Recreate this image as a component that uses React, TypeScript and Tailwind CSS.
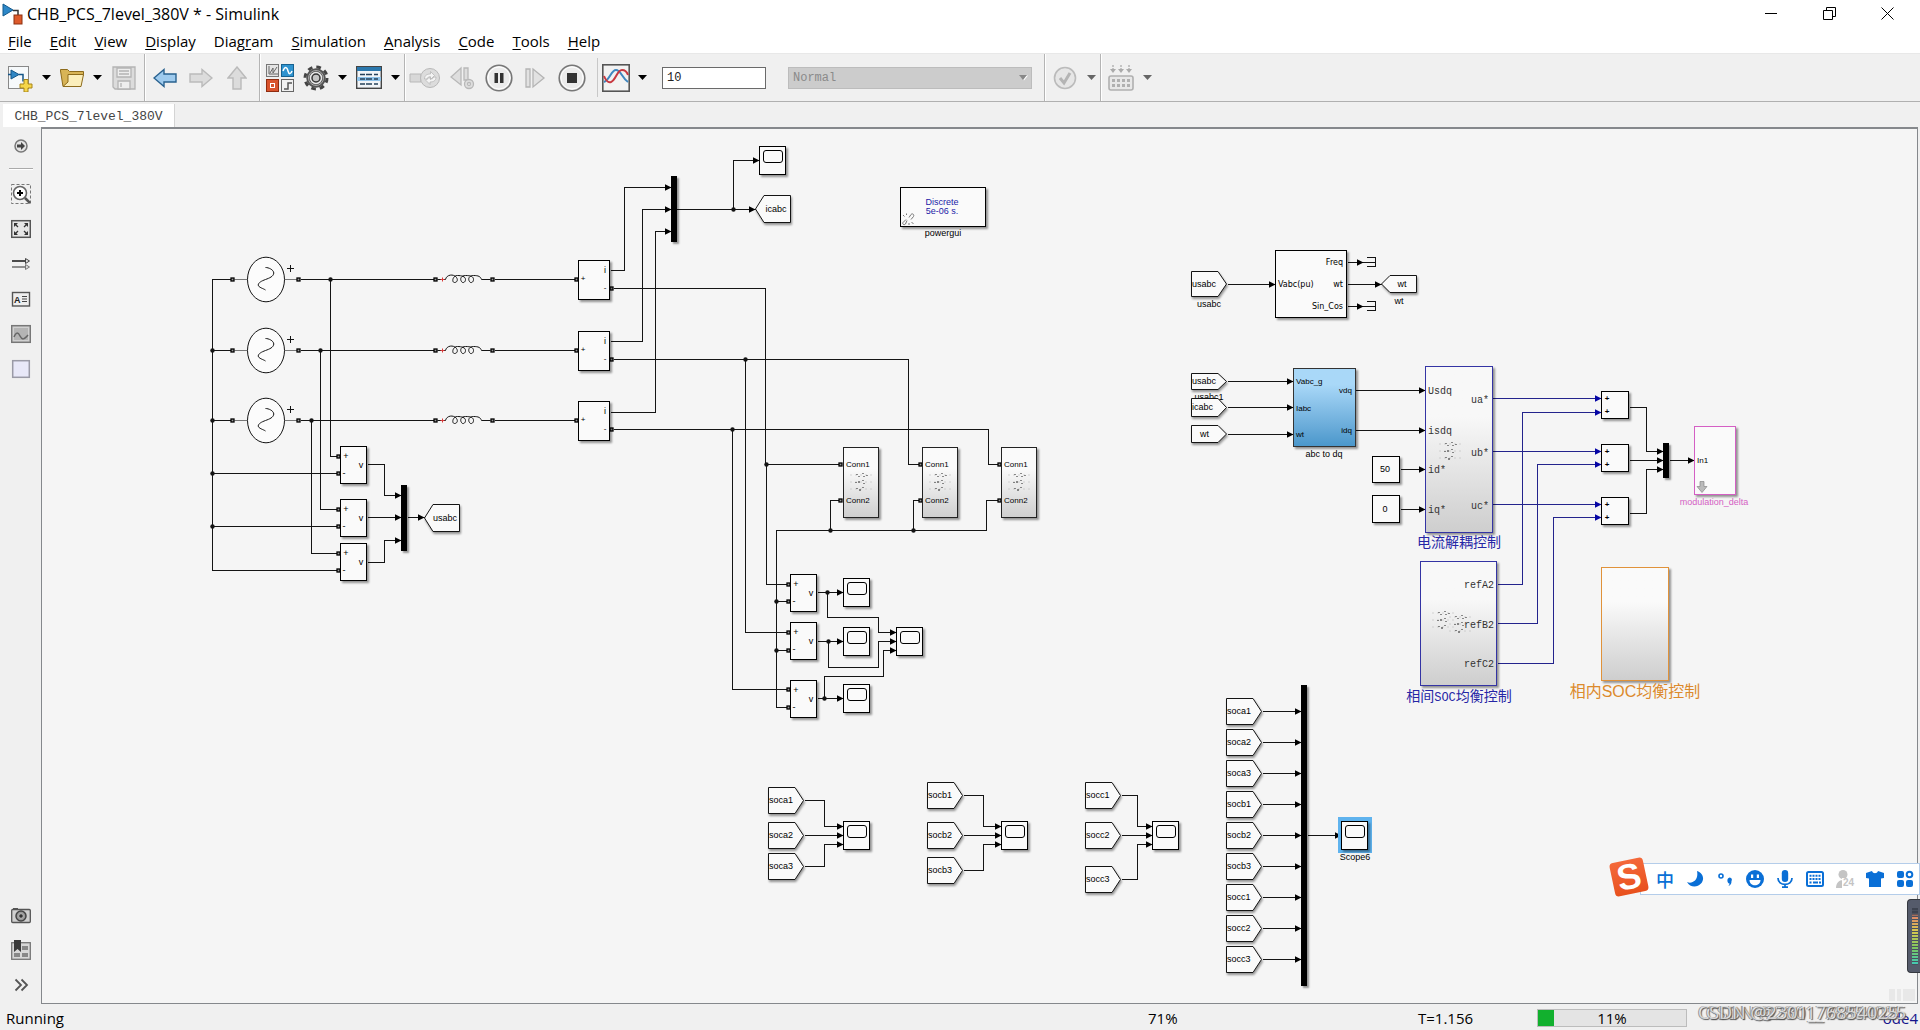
import type { ReactNode } from 'react'
import clsx from 'clsx'

// Model coordinates of the canvas's top left corner
const ORIGIN = { x: 42, y: 129 }

const menus = [
  ['', 'F', 'ile'],
  ['', 'E', 'dit'],
  ['', 'V', 'iew'],
  ['', 'D', 'isplay'],
  ['Diag', 'r', 'am'],
  ['', 'S', 'imulation'],
  ['', 'A', 'nalysis'],
  ['', 'C', 'ode'],
  ['', 'T', 'ools'],
  ['', 'H', 'elp'],
]

type Point = [number, number]
type Wire = { pts: Point[]; arrow?: boolean; blue?: boolean }

const phases = [
  { y: 279, drop: 330 },
  { y: 350, drop: 320 },
  { y: 420, drop: 311 },
]

const socRows = ['soca1', 'soca2', 'soca3', 'socb1', 'socb2', 'socb3', 'socc1', 'socc2', 'socc3'].map((name, i) => ({
  name,
  y: 711 + Math.round(i * 31),
}))

const socGroups = [
  { x: 768, turn: 824, scope: 843, tags: [['soca1', 800], ['soca2', 835], ['soca3', 866]] },
  { x: 927, turn: 983, scope: 1001, tags: [['socb1', 795], ['socb2', 835], ['socb3', 870]] },
  { x: 1085, turn: 1137, scope: 1152, tags: [['socc1', 795], ['socc2', 835], ['socc3', 879]] },
] as { x: number; turn: number; scope: number; tags: [string, number][] }[]

const wires: Wire[] = [
  // neutral of the three sources
  { pts: [[230, 279], [212, 279], [212, 570], [336, 570]] },
  { pts: [[212, 350], [230, 350]] },
  { pts: [[212, 420], [230, 420]] },
  { pts: [[212, 473], [336, 473]] },
  { pts: [[212, 526], [336, 526]] },
  ...phases.flatMap(({ y }) => [
    { pts: [[300, y], [433, y]] as Point[] },
    { pts: [[494, y], [574, y]] as Point[] },
  ]),
  { pts: [[330, 279], [330, 456], [336, 456]] },
  { pts: [[320, 350], [320, 509], [336, 509]] },
  { pts: [[311, 420], [311, 553], [336, 553]] },
  // grid voltage
  { pts: [[367, 464], [384, 464], [384, 495], [401, 495]], arrow: true },
  { pts: [[367, 517], [401, 517]], arrow: true },
  { pts: [[367, 562], [384, 562], [384, 540], [401, 540]], arrow: true },
  { pts: [[407, 517], [424, 517]], arrow: true },
  // grid current
  { pts: [[610, 270], [624, 270], [624, 187], [671, 187]], arrow: true },
  { pts: [[610, 341], [642, 341], [642, 209], [671, 209]], arrow: true },
  { pts: [[610, 412], [655, 412], [655, 231], [671, 231]], arrow: true },
  { pts: [[676, 209], [755, 209]], arrow: true },
  { pts: [[733, 209], [733, 160], [759, 160]], arrow: true },
  { pts: [[613, 288], [765, 288], [765, 464], [838, 464]] },
  { pts: [[613, 359], [908, 359], [908, 464], [918, 464]] },
  { pts: [[613, 429], [988, 429], [988, 464], [998, 464]] },
  // converter chains
  { pts: [[838, 500], [830, 500], [830, 530]] },
  { pts: [[918, 500], [913, 500], [913, 530]] },
  { pts: [[998, 500], [986, 500], [986, 530], [776, 530], [776, 707], [786, 707]] },
  { pts: [[776, 601], [786, 601]] },
  { pts: [[776, 650], [786, 650]] },
  { pts: [[766, 464], [766, 584], [786, 584]] },
  { pts: [[745, 359], [745, 632], [786, 632]] },
  { pts: [[732, 429], [732, 689], [786, 689]] },
  { pts: [[817, 592], [843, 592]], arrow: true },
  { pts: [[817, 641], [843, 641]], arrow: true },
  { pts: [[817, 698], [843, 698]], arrow: true },
  { pts: [[827, 592], [827, 617], [878, 617], [878, 632], [896, 632]], arrow: true },
  { pts: [[828, 641], [828, 667], [878, 667], [878, 641], [896, 641]], arrow: true },
  { pts: [[824, 698], [824, 676], [883, 676], [883, 650], [896, 650]], arrow: true },
  // PLL
  { pts: [[1227, 284], [1275, 284]], arrow: true },
  { pts: [[1347, 262], [1363, 262]], arrow: true },
  { pts: [[1347, 284], [1381, 284]], arrow: true },
  { pts: [[1347, 306], [1363, 306]], arrow: true },
  // abc to dq
  { pts: [[1227, 381], [1293, 381]], arrow: true },
  { pts: [[1227, 407], [1293, 407]], arrow: true },
  { pts: [[1227, 434], [1293, 434]], arrow: true },
  { pts: [[1355, 390], [1425, 390]], arrow: true },
  { pts: [[1355, 430], [1425, 430]], arrow: true },
  { pts: [[1400, 469], [1425, 469]], arrow: true },
  { pts: [[1400, 509], [1425, 509]], arrow: true },
  // modulation references
  { pts: [[1492, 398], [1601, 398]], arrow: true, blue: true },
  { pts: [[1492, 451], [1601, 451]], arrow: true, blue: true },
  { pts: [[1492, 504], [1601, 504]], arrow: true, blue: true },
  { pts: [[1497, 584], [1522, 584], [1522, 412], [1601, 412]], arrow: true, blue: true },
  { pts: [[1497, 623], [1537, 623], [1537, 464], [1601, 464]], arrow: true, blue: true },
  { pts: [[1497, 663], [1553, 663], [1553, 517], [1601, 517]], arrow: true, blue: true },
  { pts: [[1629, 407], [1646, 407], [1646, 451], [1663, 451]], arrow: true },
  { pts: [[1629, 460], [1663, 460]], arrow: true },
  { pts: [[1629, 513], [1646, 513], [1646, 469], [1663, 469]], arrow: true },
  { pts: [[1669, 460], [1694, 460]], arrow: true },
  // state of charge
  ...socGroups.flatMap(({ x, turn, scope, tags }) =>
    tags.map(([, y], i) => ({
      pts: (i === 1
        ? [[x + 36, y], [scope, y]]
        : [[x + 36, y], [turn, y], [turn, 826 + i * 9], [scope, 826 + i * 9]]) as Point[],
      arrow: true,
    })),
  ),
  ...socRows.map(({ y }) => ({ pts: [[1262, y], [1301, y]] as Point[], arrow: true })),
  { pts: [[1307, 835], [1341, 835]], arrow: true },
]

const junctions: Point[] = [
  [212, 350], [212, 420], [212, 473], [212, 526], [330, 279], [320, 350], [311, 420],
  [733, 209], [745, 359], [732, 429], [766, 464], [830, 530], [913, 530],
  [776, 601], [776, 650], [827, 592], [828, 641], [824, 698],
]

const ports: Point[] = [
  ...phases.flatMap(({ y }) => [[232, y], [298, y], [435, y], [492, y], [576, y], [611, y + 9]] as Point[]),
  [338, 456], [338, 473], [338, 509], [338, 526], [338, 553], [338, 570],
  [840, 464], [840, 500], [920, 464], [920, 500], [999, 464], [999, 500],
  [788, 584], [788, 601], [788, 632], [788, 650], [788, 689], [788, 707],
]

function Wires() {
  return (
    <svg className="absolute inset-0 h-full w-full" aria-hidden="true">
      <g transform={`translate(${0.5 - ORIGIN.x} ${0.5 - ORIGIN.y})`} fill="none" stroke="#141414">
        {phases.map(({ y }) => (
          <g key={y} transform={`translate(0 ${y})`}>
            <path d="M234 0H247M284 0H297" stroke="#777" />
            <ellipse cx="265.5" cy="0" rx="18.5" ry="22.3" fill="#fcfcfc" />
            <path d="M265 -12C268 -12 273 -10 273.300 -6.500C273 -3 269 -1.500 265 0C261 1.500 258 3 257.700 5.500C258 8 263 9 265 10.500" />
            <path d="M286.500 -11H293.500M290 -14.500V-7.500" />
            <path d="M437 0H445M481 0H490" />
            <path d="M440 0H444M442 -2V2" stroke="#d83838" />
            <path d="M445 0C446 -5 453 -6 456 -2C458 1 456 3 454 3C451 3 452 -4 457 -4C461 -4 465 -3 465 0C465 3 462 4 461 2C459 -1 461 -4 465 -4C470 -4 473 -3 473 0C473 3 470 4 469 2C467 -1 469 -4 473 -4C478 -4 480 -3 481 0" />
          </g>
        ))}
        {wires.map(({ pts, arrow, blue }, i) => {
          const [x, y] = pts[pts.length - 1]
          return (
            <g key={i} stroke={blue ? '#23238c' : '#141414'}>
              <polyline points={pts.join(' ')} shapeRendering="crispEdges" />
              {arrow && <path d={`M${x - 6.5} ${y - 3.3}L${x} ${y}L${x - 6.5} ${y + 3.3}Z`} fill={blue ? '#0505a5' : '#000'} stroke="none" />}
            </g>
          )
        })}
        {junctions.map(([x, y]) => (
          <circle key={`${x}-${y}`} cx={x} cy={y} r="2.2" fill="#141414" stroke="none" />
        ))}
        {ports.map(([x, y]) => (
          <rect key={`${x}-${y}`} x={x - 1.5} y={y - 1.5} width="3" height="3" fill="#999" stroke="#000" strokeWidth="1.300" />
        ))}
        {/* terminators */}
        {[262, 306].map((y) => (
          <path key={y} d={`M1366 ${y - 5}H1375V${y + 4}H1366M1363 ${y}H1375`} shapeRendering="crispEdges" />
        ))}
      </g>
    </svg>
  )
}

type BlockProps = { x: number; y: number; w: number; h: number; className?: string; children?: ReactNode }

function Block({ x, y, w, h, className = 'border-black bg-[#fafafa]', children }: BlockProps) {
  return (
    <div
      className={clsx('absolute border shadow-[2px_2px_2px_rgba(0,0,0,0.4)]', className)}
      style={{ left: x - ORIGIN.x, top: y - ORIGIN.y, width: w, height: h }}
    >
      {children}
    </div>
  )
}

type LabelProps = { x: number; y: number; align?: 'left' | 'center' | 'right'; className?: string; children: ReactNode }

function Label({ x, y, align = 'center', className = 'text-[9px]', children }: LabelProps) {
  return (
    <span
      className={clsx(
        'absolute -translate-y-1/2 whitespace-nowrap leading-none',
        align === 'center' && '-translate-x-1/2',
        align === 'right' && '-translate-x-full',
        className,
      )}
      style={{ left: x - ORIGIN.x, top: y - ORIGIN.y }}
    >
      {children}
    </span>
  )
}

function Tag({ x, y, h = 27, text, goto = false }: { x: number; y: number; h?: number; text: string; goto?: boolean }) {
  const end = h - 0.5
  const mid = h / 2
  return (
    <div
      className={clsx('absolute flex w-9 items-center', goto ? 'justify-center pl-1.5' : 'justify-start pl-px')}
      style={{ left: x - ORIGIN.x, top: y - ORIGIN.y, height: h }}
    >
      <svg className="absolute inset-0 h-full w-full overflow-visible drop-shadow-[1px_2px_1px_rgba(0,0,0,0.4)]" aria-hidden="true">
        <polygon
          points={goto ? `0.5,${mid} 9,0.5 35.5,0.5 35.5,${end} 9,${end}` : `0.5,0.5 27,0.5 35.5,${mid} 27,${end} 0.5,${end}`}
          fill="#fafafa"
          stroke="#141414"
        />
      </svg>
      <span className={clsx('relative text-[9px] leading-none', text === 'wt' && !goto && 'pl-2')}>{text}</span>
    </div>
  )
}

function Scope({ x, y }: { x: number; y: number }) {
  return (
    <Block x={x} y={y} w={27} h={29}>
      <div className="mx-auto mt-[3px] h-[13px] w-5 rounded-[3px] border border-black" />
    </Block>
  )
}

function Measurement({ y, x = 340 }: { y: number; x?: number }) {
  return (
    <>
      <Block x={x} y={y} w={27} h={38} />
      <Label x={x + 6} y={y + 10}>+</Label>
      <Label x={x + 4} y={y + 27}>-</Label>
      <Label x={x + 21} y={y + 19}>v</Label>
    </>
  )
}

function Mux({ x, y, h }: { x: number; y: number; h: number }) {
  return <Block x={x} y={y} w={6} h={h} className="border-black bg-black" />
}

// Faded thumbnail of what is inside a subsystem
function Preview({ x, y }: { x: number; y: number }) {
  return (
    <svg className="absolute h-5 w-6" style={{ left: x - ORIGIN.x, top: y - ORIGIN.y }} viewBox="0 0 24 20" aria-hidden="true">
      <path d="M1 3h22M1 10h22M1 17h22" stroke="#bbb" strokeDasharray="2 3" opacity="0.600" />
      <path d="M8 2v1M10 4v1M14 1v1M15 4v1M7 10v1M10 9v2M14 8v1M15 11v1M8 16v1M11 17v2M14 15v1M18 3v1" stroke="#222" />
    </svg>
  )
}

function Diagram() {
  return (
    <>
      <Wires />

      {phases.map(({ y }) => (
        <div key={y}>
          <Block x={578} y={y - 19} w={32} h={40} />
          <Label x={583} y={y} className="text-[8px]">+</Label>
          <Label x={605} y={y - 9}>i</Label>
          <Label x={605} y={y + 9} className="text-[8px]">-</Label>
        </div>
      ))}
      <Measurement y={446} />
      <Measurement y={499} />
      <Measurement y={543} />
      <Mux x={401} y={485} h={66} />
      <Tag x={424} y={504} h={28} text="usabc" goto />

      <Mux x={671} y={176} h={66} />
      <Scope x={759} y={146} />
      <Tag x={755} y={195} h={28} text="icabc" goto />

      <Block x={900} y={187} w={86} h={40}>
        <svg className="absolute bottom-0 left-0 h-3.5 w-3.5" viewBox="0 0 14 14" fill="none" stroke="#777" aria-hidden="true">
          <path d="M6 8.500L4.500 12C3 13.500 1 12 2 10.500L5 7.500M8 5.500L10 2.500C11.500 1 13.500 2.500 12.500 4.500L10 7.500M2 3l1.500 1.500M5.500 1.500v1.500M10.500 10l2 2M8 11v2" />
        </svg>
      </Block>
      <Label x={942} y={202} className="text-[9px] text-[#1c1ca8]">Discrete</Label>
      <Label x={942} y={211} className="text-[9px] text-[#1c1ca8]">5e-06 s.</Label>
      <Label x={943} y={233}>powergui</Label>

      {[843, 922, 1001].map((x) => (
        <div key={x}>
          <Block x={x} y={447} w={36} h={71} className="border-[#222] bg-linear-to-b from-[#fafafa] from-30% to-[#cfcfcf]" />
          <Label x={x + 3} y={465} align="left" className="text-[8px]">Conn1</Label>
          <Label x={x + 3} y={501} align="left" className="text-[8px]">Conn2</Label>
          <Preview x={x + 6} y={472} />
        </div>
      ))}
      <Measurement x={790} y={574} />
      <Measurement x={790} y={622} />
      <Measurement x={790} y={680} />
      <Scope x={843} y={578} />
      <Scope x={843} y={627} />
      <Scope x={843} y={684} />
      <Scope x={896} y={627} />

      {socGroups.map(({ x, scope, tags }) => (
        <div key={x}>
          {tags.map(([name, y]) => (
            <Tag key={name} x={x} y={y - 13} text={name} />
          ))}
          <Scope x={scope} y={821} />
        </div>
      ))}

      {socRows.map(({ name, y }) => (
        <Tag key={name} x={1226} y={y - 13} text={name} />
      ))}
      <Mux x={1301} y={685} h={301} />
      <div className="absolute h-9 w-[34px] bg-[#5fb3ee]" style={{ left: 1338 - ORIGIN.x, top: 817 - ORIGIN.y }} />
      <Scope x={1341} y={821} />
      <Label x={1355} y={857}>Scope6</Label>

      {/* PLL */}
      <Tag x={1191} y={271} h={26} text="usabc" />
      <Label x={1209} y={304}>usabc</Label>
      <Block x={1275} y={250} w={72} h={68} />
      <Label x={1278} y={285} align="left" className="font-['DejaVu_Sans'] text-[8px]">Vabc(pu)</Label>
      <Label x={1343} y={263} align="right" className="font-['DejaVu_Sans'] text-[8px]">Freq</Label>
      <Label x={1343} y={285} align="right" className="font-['DejaVu_Sans'] text-[8px]">wt</Label>
      <Label x={1343} y={307} align="right" className="font-['DejaVu_Sans'] text-[8px]">Sin_Cos</Label>
      <Tag x={1381} y={275} h={18} text="wt" goto />
      <Label x={1399} y={301}>wt</Label>

      {/* abc to dq */}
      <Label x={1209} y={397}>usabc1</Label>
      <Tag x={1191} y={373} h={17} text="usabc" />
      <Tag x={1191} y={398} h={19} text="icabc" />
      <Tag x={1191} y={425} h={18} text="wt" />
      <Block x={1293} y={368} w={63} h={79} className="border-[#333] bg-linear-to-b from-[#a9d8f8] from-20% to-[#4a97cb]" />
      <Label x={1296} y={382} align="left" className="text-[8px]">Vabc_g</Label>
      <Label x={1296} y={409} align="left" className="text-[8px]">Iabc</Label>
      <Label x={1296} y={435} align="left" className="text-[8px]">wt</Label>
      <Label x={1352} y={391} align="right" className="text-[8px]">vdq</Label>
      <Label x={1352} y={431} align="right" className="text-[8px]">idq</Label>
      <Label x={1324} y={454}>abc to dq</Label>
      <Block x={1372} y={456} w={28} h={27} />
      <Label x={1385} y={469}>50</Label>
      <Block x={1372} y={495} w={28} h={28} />
      <Label x={1385} y={509}>0</Label>

      {/* current decoupling control */}
      <Block x={1425} y={366} w={68} h={167} className="border-[#3434a4] bg-linear-to-b from-[#f8f8f8] from-30% to-[#cecece]" />
      <Preview x={1438} y={441} />
      {[['Usdq', 392], ['isdq', 432], ['id*', 471], ['iq*', 511]].map(([name, y]) => (
        <Label key={name} x={1428} y={y as number} align="left" className="font-['Liberation_Mono'] text-[10px] text-[#333]">{name}</Label>
      ))}
      {[['ua*', 401], ['ub*', 454], ['uc*', 507]].map(([name, y]) => (
        <Label key={name} x={1489} y={y as number} align="right" className="font-['Liberation_Mono'] text-[10px] text-[#333]">{name}</Label>
      ))}
      <Label x={1459} y={542} className="text-[14px] text-[#2626a6]">电流解耦控制</Label>

      {/* SOC balancing between phases */}
      <Block x={1420} y={561} w={77} h={125} className="border-[#3434a4] bg-linear-to-b from-[#f8f8f8] from-30% to-[#cecece]" />
      <Preview x={1431} y={610} />
      <Preview x={1448} y={614} />
      {[['refA2', 586], ['refB2', 626], ['refC2', 665]].map(([name, y]) => (
        <Label key={name} x={1494} y={y as number} align="right" className="font-['Liberation_Mono'] text-[10px] text-[#333]">{name}</Label>
      ))}
      <Label x={1459} y={696} className="text-[14px] text-[#2626a6]">
        相间<span className="font-['Liberation_Mono'] text-[12px]">SOC</span>均衡控制
      </Label>

      {[391, 444, 497].map((y) => (
        <div key={y}>
          <Block x={1601} y={y} w={28} h={28} />
          <Label x={1607} y={y + 8} className="text-[8px] font-bold">+</Label>
          <Label x={1607} y={y + 21} className="text-[8px] font-bold">+</Label>
        </div>
      ))}
      <Mux x={1663} y={443} h={35} />
      <Block x={1694} y={426} w={42} h={69} className="border-[#d45fc4] bg-[#fafafa]">
        <svg className="absolute bottom-px left-px h-3 w-3" viewBox="0 0 12 12" aria-hidden="true">
          <path d="M4 0.500h4v5h3l-5 6l-5-6h3z" fill="#bbb" stroke="#888" strokeWidth="0.700" />
        </svg>
      </Block>
      <Label x={1697} y={461} align="left" className="text-[8px]">In1</Label>
      <Label x={1714} y={502} className="text-[9px] text-[#d45fc4]">modulation_delta</Label>

      <Block x={1601} y={567} w={68} h={114} className="border-[#e0923a] bg-linear-to-b from-[#fafafa] from-30% to-[#cecece]" />
      <Label x={1635} y={692} className="text-[16px] text-[#dc8a2c]">相内SOC均衡控制</Label>
    </>
  )
}

function Group({ className, children }: { className?: string; children: ReactNode }) {
  return <div className={clsx('flex items-center gap-2 border-r border-[#b4b4b4] shadow-[1px_0_0_#fff]', className)}>{children}</div>
}

function ToolButton({ label, disabled, className = 'w-7', children }: { label: string; disabled?: boolean; className?: string; children: ReactNode }) {
  return (
    <button type="button" aria-label={label} title={label} disabled={disabled} className={clsx('flex h-8 shrink-0 items-center justify-center', className)}>
      {children}
    </button>
  )
}

function Caret({ label, dim }: { label: string; dim?: boolean }) {
  return (
    <button type="button" aria-label={label} className="flex h-8 w-[9px] shrink-0 items-center">
      <svg viewBox="0 0 9 5" className="h-[5px] w-[9px]" fill={dim ? '#666' : '#000'}>
        <path d="M0 0h9l-4.500 5z" />
      </svg>
    </button>
  )
}

function Toolbar() {
  return (
    <div className="flex h-[49px] border-b border-[#b0b0b0] border-t border-t-[#e8e8e8] bg-[#f0f0f0]">
      <Group className="pl-1.5 pr-1.5">
        <ToolButton label="New model">
          <svg viewBox="0 0 28 28" className="h-7 w-7">
            <rect x="2.500" y="2.500" width="20" height="22" fill="#f6f9fb" stroke="#888" />
            <path d="M5 6l8 4.500l-8 4.500z" fill="#2f86c4" stroke="#145587" />
            <path d="M2 10.500h3M13 10.500h4v7" fill="none" stroke="#145587" strokeWidth="1.500" />
            <path d="M18 15.500h4v4.500h4v4h-4v4h-4v-4h-4v-4h4z" fill="#f5d64a" stroke="#a8861a" />
          </svg>
        </ToolButton>
        <Caret label="New options" />
        <ToolButton label="Open" className="w-[26px]">
          <svg viewBox="0 0 26 20" className="h-5 w-[26px]">
            <path d="M1.500 3v-1.500h7l2 2h14v4h-3L19.500 18.500H4z" fill="#d8b456" stroke="#8d6b1c" />
            <path d="M4 18.500L9 14V6.500h15.500L22 18.500z" fill="#fbeebb" stroke="#8d6b1c" />
          </svg>
        </ToolButton>
        <Caret label="Open options" />
        <ToolButton label="Save" disabled>
          <svg viewBox="0 0 24 24" className="h-6 w-6" fill="#dcdcdc" stroke="#b4b4b4" strokeWidth="1.300">
            <path d="M1 1h22v22H3l-2-2z" />
            <path d="M5 2h14v9H5zM6 15h12v8H6z" fill="#eee" />
            <path d="M7 5h10M7 8h10M9 17v4" />
          </svg>
        </ToolButton>
      </Group>
      <Group className="pl-1.5 pr-2">
        <ToolButton label="Back">
          <svg viewBox="0 0 24 20" className="h-5 w-6" fill="#9fcbee" stroke="#28618f" strokeWidth="1.400">
            <path d="M1 10L11 1.500v4.500h12v8H11v4.500z" />
          </svg>
        </ToolButton>
        <ToolButton label="Forward" disabled>
          <svg viewBox="0 0 24 20" className="h-5 w-6" fill="#dcdcdc" stroke="#bababa" strokeWidth="1.400">
            <path d="M23 10L13 1.500v4.500H1v8h12v4.500z" />
          </svg>
        </ToolButton>
        <ToolButton label="Up to parent" disabled>
          <svg viewBox="0 0 20 24" className="h-6 w-5" fill="#dcdcdc" stroke="#bababa" strokeWidth="1.400">
            <path d="M10 1l9 11h-5v11H6V12H1z" />
          </svg>
        </ToolButton>
      </Group>
      <Group className="pl-1.5 pr-1">
        <ToolButton label="Library browser">
          <svg viewBox="0 0 28 28" className="h-7 w-7" fill="none">
            <rect x="0.500" y="0.500" width="12" height="12" fill="#e4e4e4" stroke="#777" />
            <path d="M3 2v8h9M4 9l3-5v5l4-6" stroke="#666" />
            <rect x="15.500" y="0.500" width="12" height="12" fill="#2f93cf" stroke="#17618f" />
            <path d="M17 7c2-5 4-4 5 0s3 3 4 0" stroke="#fff" strokeWidth="1.500" />
            <rect x="0.500" y="15.500" width="12" height="12" fill="#d9532c" stroke="#8f2c10" />
            <rect x="4.500" y="19.500" width="4" height="4" stroke="#fff" />
            <rect x="15.500" y="15.500" width="12" height="12" fill="#f0f0f0" stroke="#666" />
            <path d="M18 25h4v-6h4" stroke="#555" strokeWidth="1.500" />
          </svg>
        </ToolButton>
        <ToolButton label="Model configuration">
          <svg viewBox="0 0 26 26" className="h-[26px] w-[26px]" fill="none">
            <circle cx="13" cy="13" r="11" stroke="#444" strokeWidth="3" strokeDasharray="4.640 4" />
            <circle cx="13" cy="13" r="8" fill="#e8e8e8" stroke="#555" strokeWidth="3.500" />
            <circle cx="13" cy="13" r="7.500" stroke="#aaa" />
            <circle cx="13" cy="13" r="4" fill="#c4c4c4" stroke="#333" strokeWidth="1.500" />
          </svg>
        </ToolButton>
        <Caret label="Configuration options" />
        <ToolButton label="Model explorer">
          <svg viewBox="0 0 26 23" className="h-[23px] w-[26px]">
            <rect x="0.700" y="0.700" width="24.600" height="21.600" fill="#f2f5f8" stroke="#444" strokeWidth="1.400" />
            <path d="M1 1h24v4H1z" fill="#2b78ad" />
            <path d="M1 11h24v4H1z" fill="#8fc3ea" />
            <path d="M4 8.500h5M10 8.500h6M18 8.500h4M4 13h5M10 13h6M18 13h4M4 18h5M10 18h6M18 18h4" stroke="#26415a" strokeWidth="1.600" />
          </svg>
        </ToolButton>
        <Caret label="Explorer options" />
      </Group>
      <div className="flex items-center gap-2 pl-1 pr-2.5">
        <ToolButton label="Fast restart" disabled className="w-8">
          <svg viewBox="0 0 32 22" className="h-[22px] w-8" fill="#d8d8d8" stroke="#b8b8b8">
            <path d="M1 7h11v8H1z" />
            <circle cx="21" cy="11" r="9.500" fill="#dcdcdc" />
            <path d="M15.500 12c0-4 3-5 6-5V4.500l4 4l-4 4V10c-2 0-3 0-3.500 2zM27 10c0 4-3 5-6 5v2.500l-4-4l4-4V12c2 0 3 0 3.500-2z" fill="#f4f4f4" strokeWidth="0.800" />
          </svg>
        </ToolButton>
        <ToolButton label="Step back" disabled>
          <svg viewBox="0 0 26 24" className="h-6 w-[26px]" fill="#dedede" stroke="#b8b8b8" strokeWidth="1.300">
            <path d="M11 2v17L1 11zM14 2h4v12h-4z" />
            <circle cx="19" cy="18" r="4.500" />
            <circle cx="19" cy="18" r="1.500" fill="#f4f4f4" />
          </svg>
        </ToolButton>
        <ToolButton label="Pause">
          <svg viewBox="0 0 28 28" className="h-7 w-7">
            <circle cx="14" cy="14" r="12.800" fill="#ececec" stroke="#777" strokeWidth="1.600" />
            <circle cx="14" cy="14" r="11" fill="none" stroke="#fff" />
            <path d="M9.500 9h3.500v10H9.500zM15 9h3.500v10H15z" fill="#333" />
          </svg>
        </ToolButton>
        <ToolButton label="Step forward" disabled>
          <svg viewBox="0 0 22 22" className="h-[22px] w-[22px]" fill="#e2e2e2" stroke="#b4b4b4" strokeWidth="1.300">
            <path d="M2 2h4v18H2zM9 2l11 9L9 20z" />
          </svg>
        </ToolButton>
        <ToolButton label="Stop" className="w-[30px]">
          <svg viewBox="0 0 28 28" className="h-7 w-7">
            <circle cx="14" cy="14" r="12.800" fill="#ececec" stroke="#777" strokeWidth="1.600" />
            <circle cx="14" cy="14" r="11" fill="none" stroke="#fff" />
            <path d="M9 9h10v10H9z" fill="#333" />
          </svg>
        </ToolButton>
      </div>
      <div className="my-1 w-px bg-[#c8c8c8]" />
      <Group className="pl-1 pr-3">
        <ToolButton label="Simulation data inspector">
          <svg viewBox="0 0 28 28" className="h-7 w-7" fill="none">
            <rect x="0.800" y="0.800" width="26.400" height="26.400" fill="#f2f2f2" stroke="#555" strokeWidth="1.600" />
            <path d="M2 18C8 16 9 6 14 6s6 8 12 12" stroke="#3f87c0" strokeWidth="2" />
            <path d="M2 12c2 5 4 7 7 6c5-2 6-12 11-12c3 0 5 2 6 5" stroke="#c83840" strokeWidth="2" />
          </svg>
        </ToolButton>
        <Caret label="Inspector options" />
        <input
          aria-label="Simulation stop time"
          defaultValue="10"
          className="ml-[7px] h-[22px] w-26 border border-[#6a6a6a] bg-white px-1 font-['Liberation_Mono'] text-[12px] text-[#222]"
        />
        <div className="relative ml-3.5 w-61">
          <select
            aria-label="Simulation mode"
            disabled
            className="block h-[22px] w-full appearance-none border border-[#bcbcbc] bg-[#cccccc] px-1 font-['Liberation_Mono'] text-[12px] text-[#8a8a8a] opacity-100"
          >
            <option>Normal</option>
          </select>
          <svg viewBox="0 0 9 6" className="absolute right-1 top-2 h-1.5 w-[9px]" aria-hidden="true">
            <path d="M1 0.500h8l-4 5z" fill="#fff" />
            <path d="M0 0h8l-4 5z" fill="#888" />
          </svg>
        </div>
      </Group>
      <Group className="pl-1.5 pr-1">
        <ToolButton label="Model advisor" disabled>
          <svg viewBox="0 0 24 24" className="h-6 w-6" fill="none">
            <circle cx="12" cy="12" r="10.500" fill="#e6e6e6" stroke="#bbb" strokeWidth="1.600" />
            <path d="M7 12l4 5l6-10" stroke="#b4b4b4" strokeWidth="3" />
          </svg>
        </ToolButton>
        <Caret label="Advisor options" dim />
      </Group>
      <div className="flex items-center gap-2 pl-1.5">
        <ToolButton label="Build" disabled>
          <svg viewBox="0 0 26 26" className="h-[26px] w-[26px]" fill="none" stroke="#b0b0b0">
            <path d="M5 0v5M13 0v5M21 0v5" strokeWidth="1.400" strokeDasharray="2 1" />
            <path d="M2 4h6l-3 4zM10 4h6l-3 4zM18 4h6l-3 4z" fill="#aaa" stroke="none" />
            <rect x="1" y="11" width="24" height="14" rx="2" fill="#e8e8e8" strokeWidth="1.600" />
            <path d="M4 15.500h18M4 20.500h18" strokeWidth="3" strokeDasharray="3 2" />
          </svg>
        </ToolButton>
        <Caret label="Build options" dim />
      </div>
    </div>
  )
}

function SideButton({ label, children }: { label: string; children: ReactNode }) {
  return (
    <button type="button" aria-label={label} title={label} className="flex h-5 w-5 items-center justify-center">
      <svg viewBox="0 0 20 20" className="h-5 w-5" fill="none">
        {children}
      </svg>
    </button>
  )
}

function Palette() {
  return (
    <aside className="flex w-[41px] shrink-0 flex-col items-center justify-between pb-[9px] pt-[9px]">
      <div className="flex flex-col items-center">
        <SideButton label="Hide browser">
          <circle cx="10" cy="10" r="6" fill="#e4e4e4" stroke="#777" strokeWidth="1.500" />
          <path d="M6 8.500h4V6l4 4l-4 4v-2.500H6z" fill="#444" />
        </SideButton>
        <div className="mt-3 h-0.5 w-6 border-b border-white bg-[#aaa]" />
        <div className="mt-3.5 flex flex-col gap-[15px]">
          <SideButton label="Zoom">
            <rect x="0.500" y="0.500" width="19" height="19" stroke="#777" strokeDasharray="3 2" />
            <circle cx="9" cy="9" r="6.500" fill="#fff" stroke="#666" strokeWidth="1.600" />
            <path d="M6 9h6M9 6v6" stroke="#000" strokeWidth="2" />
            <path d="M14 14l5 5" stroke="#555" strokeWidth="2.500" />
          </SideButton>
          <SideButton label="Fit to view">
            <rect x="0.700" y="1.700" width="18.600" height="16.600" fill="#e6e6e6" stroke="#555" strokeWidth="1.500" />
            <path d="M3 4h4l-4 4zM17 4v4l-4-4zM3 16v-4l4 4zM17 16h-4l4-4z" fill="#333" />
            <path d="M4 5l3 3M16 5l-3 3M4 15l3-3M16 15l-3-3" stroke="#333" strokeWidth="1.300" />
          </SideButton>
          <SideButton label="Sample time">
            <path d="M1 7h14" stroke="#222" strokeWidth="1.600" />
            <path d="M14.500 4.500L18.500 7l-4 2.500z" fill="#ddd" stroke="#444" />
            <path d="M1 13h14" stroke="#777" strokeWidth="1.600" />
            <path d="M14.500 10.500l4 2.500l-4 2.500z" fill="#ddd" stroke="#777" />
          </SideButton>
          <SideButton label="Annotation">
            <rect x="1.500" y="3.500" width="17" height="13.500" fill="#eee" stroke="#555" strokeWidth="1.400" />
            <text x="3" y="14" fontSize="9" fontWeight="bold" fill="#222" fontFamily="Liberation Sans">A</text>
            <path d="M11 7.500h5M11 10h5M11 12.500h5" stroke="#444" />
          </SideButton>
          <SideButton label="Image">
            <rect x="0.700" y="1.700" width="18.600" height="16.600" fill="#d0d0d0" stroke="#777" strokeWidth="1.500" />
            <rect x="3" y="4" width="14" height="12" fill="#b4b4b4" />
            <path d="M3 13c2-5 4-5 6-1s4 4 8-1" stroke="#666" strokeWidth="1.500" />
          </SideButton>
          <SideButton label="Area">
            <rect x="1.700" y="1.700" width="16.600" height="16.600" fill="#e8e8f8" stroke="#9a9aa6" strokeWidth="1.500" />
          </SideButton>
        </div>
      </div>
      <div className="flex flex-col gap-[15px]">
        <SideButton label="Screenshot">
          <rect x="0.700" y="4.500" width="18.600" height="13" rx="1" fill="#d0d0d0" stroke="#555" strokeWidth="1.300" />
          <path d="M2 3h5v1.500H2z" fill="#555" />
          <circle cx="10" cy="11" r="5" fill="#999" stroke="#444" strokeWidth="1.500" />
          <circle cx="10" cy="11" r="2.300" fill="#333" stroke="#bbb" />
        </SideButton>
        <SideButton label="Viewmarks">
          <rect x="0.700" y="2.700" width="18.600" height="16.600" fill="#d8d8d8" stroke="#777" strokeWidth="1.300" />
          <path d="M11 6h6v4h-6zM3 13h6v4H3zM11 13h6v4h-6z" fill="#888" />
          <path d="M3 0h7v12l-3.500-3L3 12z" fill="#3a3a3a" />
        </SideButton>
        <SideButton label="More">
          <path d="M4.500 4.500L10 10l-5.500 5.500M10.500 4.500L16 10l-5.500 5.500" stroke="#555" strokeWidth="1.800" />
        </SideButton>
      </div>
    </aside>
  )
}

function ImeBar() {
  return (
    <div className="absolute right-0 top-[736px] flex h-8 w-[280px] items-center justify-end gap-3 border border-[#b4cdea] bg-white pr-[5px] text-[#0a6fd6]">
      <div className="absolute -left-[29px] -top-1 flex h-[34px] w-[34px] -rotate-12 items-center justify-center rounded-[4px] bg-linear-to-b from-[#f4693a] to-[#e8501c] font-['Liberation_Sans'] text-[36px] font-bold leading-none text-white">
        S
      </div>
      <span className="flex w-[18px] justify-center font-['Noto_Sans_CJK_SC'] text-[18px] font-medium leading-none">中</span>
      <svg viewBox="0 0 18 18" className="h-[18px] w-[18px]" fill="currentColor">
        <path d="M11 1c6 2 8 8 4 12.500C11 18 4 17.500 1 12c5 2.500 12-2 10-11z" />
      </svg>
      <svg viewBox="0 0 18 18" className="h-[18px] w-[18px]" fill="currentColor">
        <circle cx="5" cy="6" r="2" fill="none" stroke="currentColor" strokeWidth="1.600" />
        <path d="M11.500 9.500a2.200 2.200 0 1 1 4 1.500c0 3-1 4-3 5c.5-1 1-1.500 1-2.500c-1.500 0-2.500-2-2-4z" />
      </svg>
      <svg viewBox="0 0 18 18" className="h-[18px] w-[18px]" fill="currentColor">
        <circle cx="9" cy="9" r="9" />
        <path d="M5 4.500h2.200v3.500H5zM10.800 4.500H13v3.500h-2.200zM3.500 10h11c0 7-11 7-11 0z" fill="#fff" />
      </svg>
      <svg viewBox="0 0 18 18" className="h-[18px] w-[18px]" fill="currentColor">
        <rect x="5.800" y="0" width="6.400" height="12" rx="3.200" />
        <path d="M2 8c0 8.500 14 8.500 14 0M9 15v2M6 17.200h6" fill="none" stroke="currentColor" strokeWidth="1.800" />
      </svg>
      <svg viewBox="0 0 18 18" className="h-[18px] w-[18px]" fill="none" stroke="currentColor">
        <rect x="1" y="2" width="16" height="14" rx="1.500" strokeWidth="2" />
        <path d="M3.500 5.800h11M3.500 9h11" strokeWidth="2" strokeDasharray="2 1" />
        <path d="M3.500 12.500h2M7 12.500h5M13 12.500h2" strokeWidth="2" />
      </svg>
      <span className="relative h-[18px] w-[18px] text-[#c4c4c4]">
        <svg viewBox="0 0 18 18" className="h-[18px] w-[18px]" fill="currentColor">
          <circle cx="7" cy="4.500" r="4.500" />
          <path d="M0 18c0-5 3-8 7-8v8z" />
        </svg>
        <span className="absolute left-1.5 top-2 bg-white px-px font-['Liberation_Sans'] text-[10px] font-bold leading-none">24</span>
      </span>
      <svg viewBox="0 0 18 18" className="h-[18px] w-[18px]" fill="currentColor">
        <path d="M0 3l6-2c1 3 5 3 6 0l6 2v5l-3 .500V17H3V8.500L0 8z" />
      </svg>
      <svg viewBox="0 0 18 18" className="h-[18px] w-[18px]" fill="currentColor">
        <rect x="1" y="1" width="7" height="7" rx="2" />
        <circle cx="13.500" cy="4.500" r="2.800" fill="none" stroke="currentColor" strokeWidth="2" />
        <rect x="1" y="10" width="7" height="7" rx="2" />
        <rect x="10" y="10" width="7" height="7" rx="2" />
      </svg>
    </div>
  )
}

function LevelMeter() {
  return (
    <div className="absolute right-0 top-[772px] flex h-[74px] w-[13px] justify-end rounded-l-[4px] border border-r-0 border-[#35383f] bg-[#555b6b] py-2 pr-0.5">
      <svg viewBox="0 0 6 57" className="h-[57px] w-1.5" preserveAspectRatio="none" aria-hidden="true">
        <defs>
          <linearGradient id="level" x1="0" y1="0" x2="0" y2="1">
            <stop offset="0" stopColor="#3d4350" />
            <stop offset="0.100" stopColor="#3d4350" />
            <stop offset="0.150" stopColor="#e08868" />
            <stop offset="0.400" stopColor="#d8c850" />
            <stop offset="0.700" stopColor="#7cc860" />
            <stop offset="1" stopColor="#40c8b8" />
          </linearGradient>
        </defs>
        <rect width="6" height="57" fill="url(#level)" />
        {Array.from({ length: 19 }, (_, i) => (
          <rect key={i} y={i * 3 + 2} width="6" height="1" fill="#4a505e" />
        ))}
      </svg>
    </div>
  )
}

export default function App() {
  return (
    <div className="flex min-h-screen flex-col overflow-hidden bg-[#f0f0f0] font-['Open_Sans','Noto_Sans_CJK_SC',sans-serif] text-[15px] leading-5 text-black">
      <header className="bg-white">
        <div className="flex h-[29px] items-center pb-0.5">
          <svg viewBox="0 0 22 22" className="ml-0.5 h-[22px] w-[22px]">
            <path d="M1 1l10 6l-10 6z" fill="#2d87c8" stroke="#155a8c" />
            <path d="M11 7.500h5v5" fill="none" stroke="#333" strokeWidth="1.500" />
            <rect x="12" y="12" width="8" height="9" fill="#dd5a2b" stroke="#8c3010" />
          </svg>
          <h1 className="ml-[3px] text-[16px]">CHB_PCS_7level_380V * - Simulink</h1>
          <div className="ml-auto flex h-full">
            <button type="button" aria-label="Minimize" className="flex w-[58px] items-center justify-center">
              <span className="h-px w-3 bg-black" />
            </button>
            <button type="button" aria-label="Restore" className="flex w-[58px] items-center justify-center">
              <svg viewBox="0 0 13 13" className="h-[13px] w-[13px]" fill="none" stroke="#000">
                <path d="M0.500 3.500h9v9h-9zM3.500 3.500v-3h9v9h-3" />
              </svg>
            </button>
            <button type="button" aria-label="Close" className="flex w-[58px] items-center justify-center">
              <svg viewBox="0 0 13 13" className="h-[13px] w-[13px]" stroke="#000">
                <path d="M0.500 0.500l12 12M12.500 0.500l-12 12" />
              </svg>
            </button>
            <span className="w-1" />
          </div>
        </div>
        <nav className="flex h-6 items-center gap-[18px] pl-2">
          {menus.map(([before, key, after]) => (
            <button type="button" key={after}>
              {before}
              <u className="underline-offset-2">{key}</u>
              {after}
            </button>
          ))}
        </nav>
      </header>

      <Toolbar />

      <div className="flex h-[25px] items-end pl-[3px]">
        <button type="button" className="h-[23px] w-[172px] border-r border-[#d4d4d4] bg-white pt-0.5 font-['Liberation_Mono'] text-[13px] text-[#444]">
          CHB_PCS_7level_380V
        </button>
      </div>

      <div className="relative flex flex-1">
        <Palette />
        <main className="relative min-h-[877px] flex-1 overflow-hidden border-x border-b border-t-2 border-[#85888c] bg-[#f5f5f5] font-['Liberation_Sans','Noto_Sans_CJK_SC',sans-serif]">
          <Diagram />
          <div className="absolute bottom-0.5 right-0.5 flex gap-0.5">
            <span className="h-3 w-1.5 bg-[#e8e8e8]" />
            <span className="h-3 w-1 bg-[#e8e8e8]" />
            <span className="h-3 w-3 bg-[#e8e8e8]" />
          </div>
        </main>
        <div className="w-0.5" />
        <ImeBar />
        <LevelMeter />
      </div>

      <footer className="relative flex h-[26px] items-center pl-1.5 pt-0.5">
        <span className="flex-1">Running</span>
        <span className="w-[270px]">71%</span>
        <span className="w-[119px]">T=1.156</span>
        <div role="progressbar" aria-valuenow={11} className="relative h-[18px] w-[150px] border border-[#bcbcbc] bg-[#e4e4e4]">
          <div className="h-full bg-[#12b02e]" style={{ width: '11%' }} />
          <span className="absolute inset-0 text-center leading-4">11%</span>
        </div>
        <span className="w-[233px] pr-0.5 text-right text-[#14148c]">ode4</span>
        <div className="absolute -top-1 right-3.5 text-[18px] leading-6 text-white/70 [text-shadow:1px_1px_1px_#555,-1px_0_0_#999]">
          <span className="absolute right-2 whitespace-nowrap">CSDN @2301_76854025</span>
          <span className="whitespace-nowrap">CSDN @2301_76854025</span>
        </div>
      </footer>
    </div>
  )
}
